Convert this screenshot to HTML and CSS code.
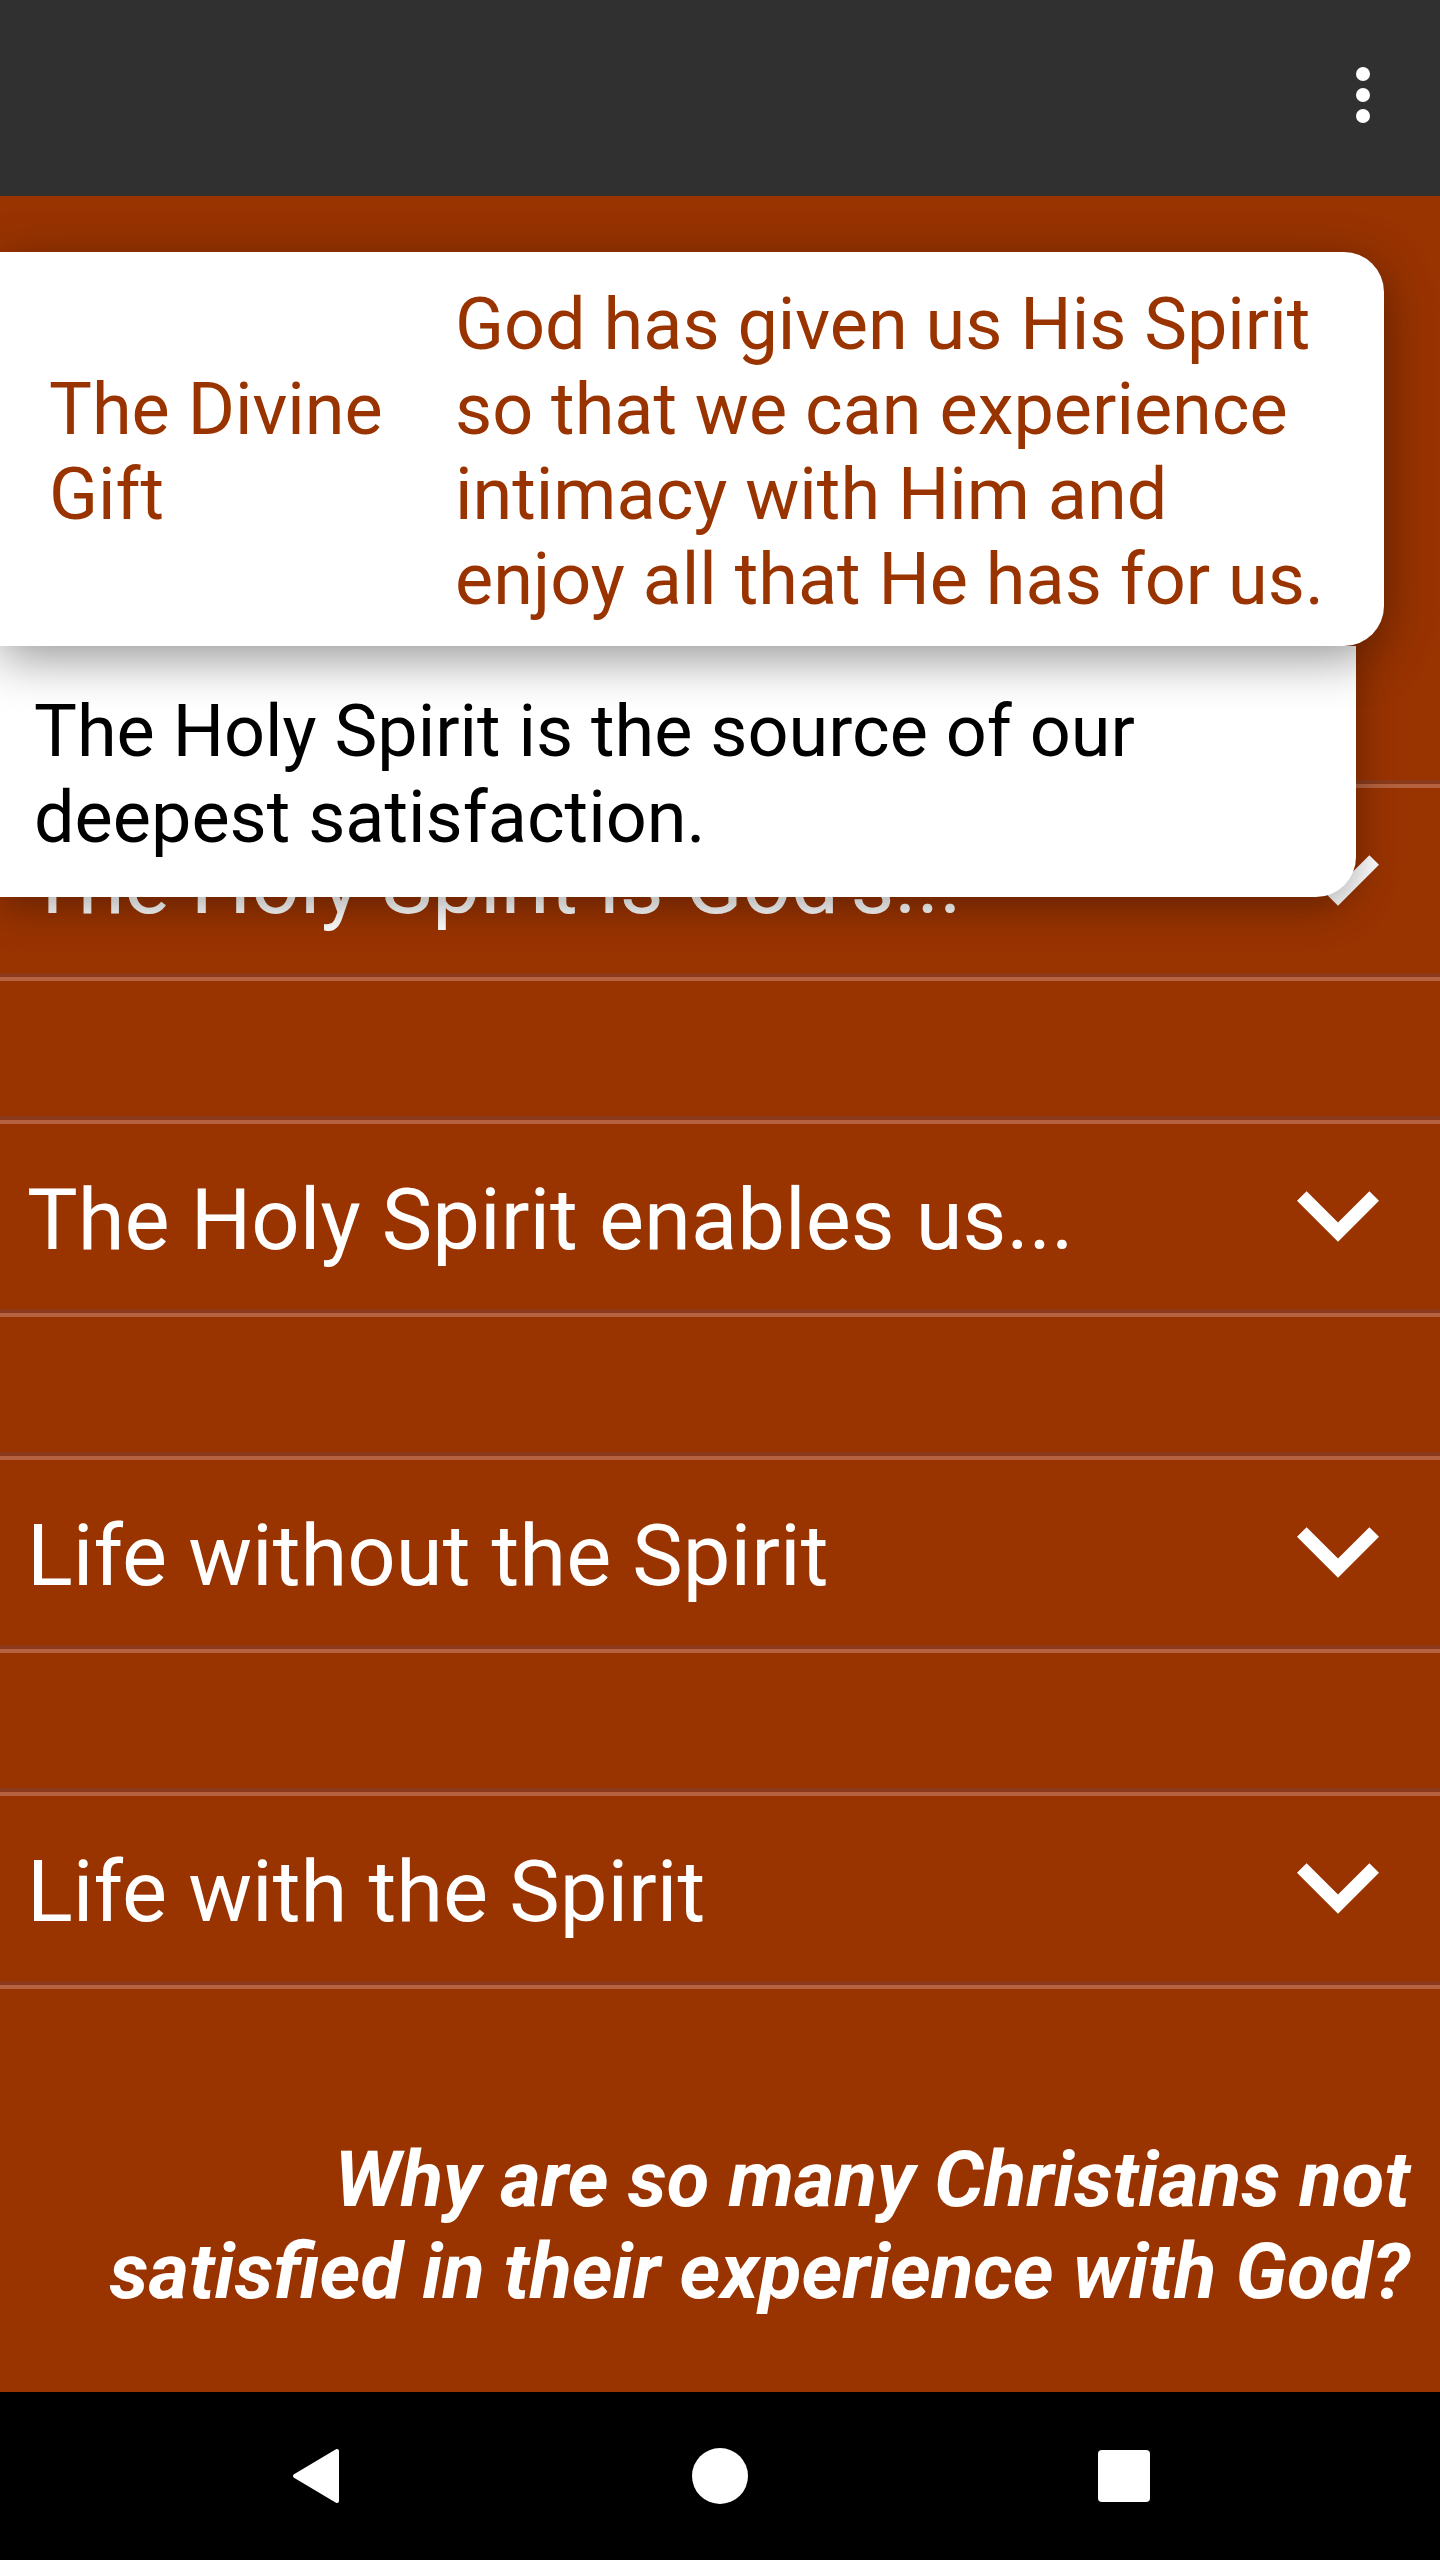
FILE: index.html
```html
<!DOCTYPE html>
<html lang="en">
<head>
<meta charset="utf-8">
<title>The Divine Gift</title>
<link rel="stylesheet" href="styles.css">
</head>
<body>
<div class="screen">
  <header class="appbar">
    <button class="menu" aria-label="More options">
      <svg width="14" height="56" viewBox="0 0 14 56"><circle cx="7" cy="7" r="7"/><circle cx="7" cy="28" r="7"/><circle cx="7" cy="49" r="7"/></svg>
    </button>
  </header>

  <main class="content">
    <section class="accordion">
      <div class="item">
        <div class="item-head"><span class="item-title">The Holy Spirit is God's...</span>
          <svg class="chev" width="82" height="51" viewBox="6 8.59 12 7.41"><path d="M16.59 8.59L12 13.17 7.41 8.59 6 10l6 6 6-6z"/></svg></div>
      </div>
      <div class="item">
        <div class="item-head"><span class="item-title">The Holy Spirit enables us...</span>
          <svg class="chev" width="82" height="51" viewBox="6 8.59 12 7.41"><path d="M16.59 8.59L12 13.17 7.41 8.59 6 10l6 6 6-6z"/></svg></div>
      </div>
      <div class="item">
        <div class="item-head"><span class="item-title">Life without the Spirit</span>
          <svg class="chev" width="82" height="51" viewBox="6 8.59 12 7.41"><path d="M16.59 8.59L12 13.17 7.41 8.59 6 10l6 6 6-6z"/></svg></div>
      </div>
      <div class="item">
        <div class="item-head"><span class="item-title">Life with the Spirit</span>
          <svg class="chev" width="82" height="51" viewBox="6 8.59 12 7.41"><path d="M16.59 8.59L12 13.17 7.41 8.59 6 10l6 6 6-6z"/></svg></div>
      </div>
    </section>

    <p class="question">Why are so many Christians not satisfied in their experience with God?</p>

    <div class="tip tip-def">
      <div class="tip-term">The Divine Gift</div>
      <div class="tip-desc">God has given us His Spirit so that we can experience intimacy with Him and enjoy all that He has for us.</div>
    </div>
    <div class="tip tip-note">
      <p class="tip-text">The Holy Spirit is the source of our deepest satisfaction.</p>
    </div>
  </main>

  <nav class="navbar">
    <div class="nav-slot">
      <svg width="50" height="58" viewBox="0 0 50 58"><path d="M46 4 L46 54 L4 29 Z" fill="#fff" stroke="#fff" stroke-width="4" stroke-linejoin="round"/></svg>
    </div>
    <div class="nav-slot">
      <svg width="56" height="56" viewBox="0 0 56 56"><circle cx="28" cy="28" r="28" fill="#fff"/></svg>
    </div>
    <div class="nav-slot">
      <svg width="52" height="52" viewBox="0 0 52 52"><rect width="52" height="52" rx="4" fill="#fff"/></svg>
    </div>
  </nav>
</div>
</body>
</html>
```

FILE: styles.css
```css
* { box-sizing: border-box; }
html, body {
  margin: 0;
  padding: 0;
  background: #000;
}
body {
  font-family: Roboto, "Liberation Sans", sans-serif;
}
.screen {
  width: 1440px;
  height: 2560px;
  display: flex;
  flex-direction: column;
  overflow: hidden;
}
.appbar {
  height: 196px;
  flex: 0 0 196px;
  background: #303030;
  display: flex;
  justify-content: flex-end;
  align-items: center;
  padding-right: 70px;
  position: relative;
  z-index: 5;
}
.menu {
  background: none;
  border: 0;
  padding: 0;
  margin: 0;
  display: flex;
  fill: #fff;
  margin-top: -6px;
}
.content {
  flex: 1;
  background: #993300;
  position: relative;
  display: flex;
  flex-direction: column;
}
.accordion {
  padding-top: 584px;
  display: flex;
  flex-direction: column;
  gap: 135px;
}
.item::before,
.item::after {
  content: "";
  display: block;
  height: 8px;
  background: linear-gradient(#8b3b1b 0 50%, #b4623f 50% 100%);
}
.item-head {
  height: 185px;
  display: flex;
  align-items: center;
  justify-content: space-between;
  padding: 0 61px 0 27px;
}
.item-title {
  color: #fff;
  font-size: 85px;
  line-height: 1;
  padding-top: 8px;
}
.chev {
  fill: #fff;
  display: block;
}
.question {
  margin: 145px 0 0;
  padding: 0 30px 0 60px;
  text-align: right;
  color: #fff;
  font-size: 78px;
  line-height: 92px;
  font-weight: 700;
  font-style: italic;
}
.tip {
  position: absolute;
  left: 0;
  background: #fff;
}
.tip-def {
  top: 56px;
  width: 1384px;
  height: 394px;
  border-radius: 0 40px 40px 0;
  display: grid;
  grid-template-columns: 380px 1fr;
  column-gap: 26px;
  align-items: center;
  padding: 6px 34px 0 49px;
  color: #993300;
  font-size: 72px;
  line-height: 85px;
  box-shadow: 0 12px 50px rgba(0, 0, 0, 0.42);
  z-index: 3;
}
.tip-note {
  top: 450px;
  width: 1356px;
  height: 251px;
  border-radius: 0 0 40px 0;
  display: flex;
  align-items: center;
  padding: 6px 40px 0 34px;
  box-shadow: 0 10px 40px rgba(0, 0, 0, 0.35);
  z-index: 2;
}
.tip-text {
  margin: 0;
  color: #000;
  font-size: 72px;
  line-height: 86px;
}
.navbar {
  height: 168px;
  flex: 0 0 168px;
  background: #000;
  display: flex;
  justify-content: center;
  align-items: center;
}
.nav-slot {
  width: 404px;
  display: flex;
  justify-content: center;
  align-items: center;
}
.nav-slot svg { display: block; }
```
